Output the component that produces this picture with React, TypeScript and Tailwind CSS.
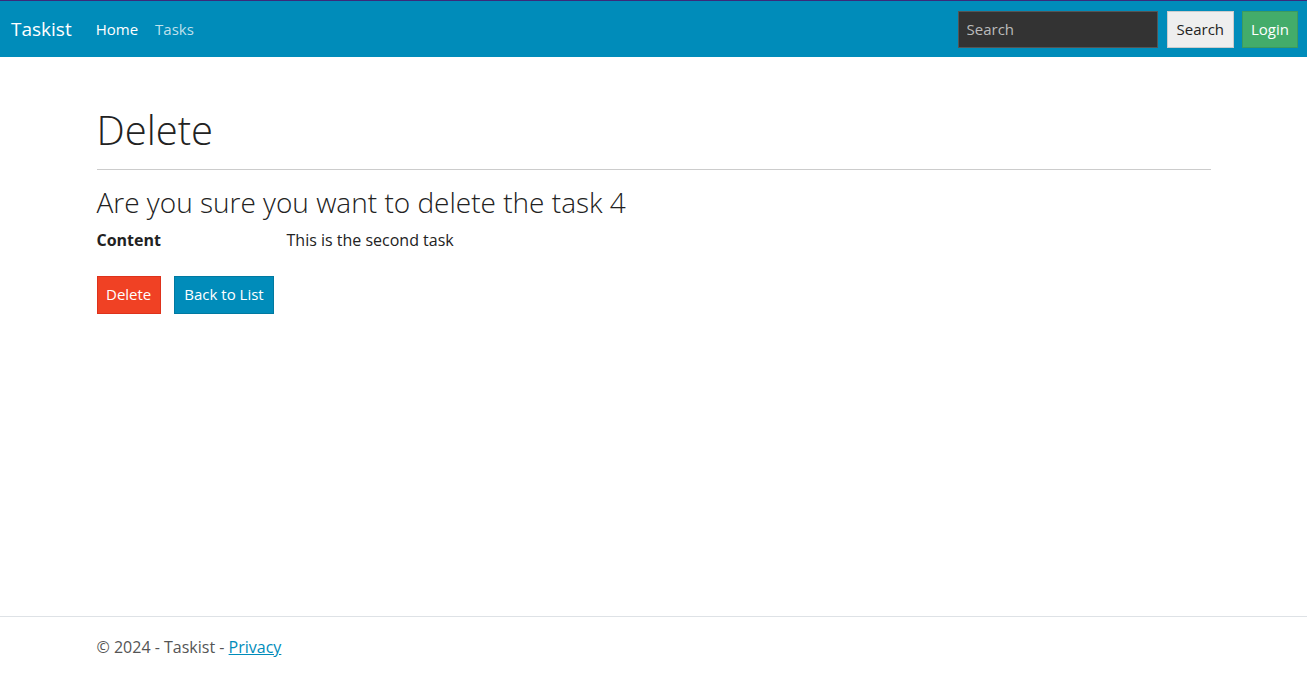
export default function App() {
  return (
    <div
      className="min-h-screen flex flex-col bg-white text-[#222]"
      style={{ fontFamily: '"Open Sans", "Liberation Sans", sans-serif' }}
    >
      {/* Navbar */}
      <nav className="h-[57px] bg-[#008cba] border-t border-[#3a2a7a] flex items-center pl-[11px] pr-[9px]">
        <a className="text-[19px] text-white mr-[24px] leading-none">Taskist</a>
        <ul className="flex items-center gap-[17px] text-[15px]">
          <li className="text-white">Home</li>
          <li className="text-white/75">Tasks</li>
        </ul>
        <div className="ml-auto flex items-center">
          <input
            placeholder="Search"
            className="w-[200px] h-[37px] bg-[#333] border border-[#555] px-[8px] text-[15px] text-white placeholder:text-[#bbb] outline-none"
          />
          <button className="ml-[9px] h-[37px] px-[9px] bg-[#eee] border border-[#ccc] text-[15px] text-[#222]">
            Search
          </button>
          <button className="ml-[8px] h-[37px] px-[8px] bg-[#43ac6a] border border-[#3c9a5f] text-[15px] text-white">
            Login
          </button>
        </div>
      </nav>

      {/* Main */}
      <main className="flex-1">
        <div className="max-w-[1140px] mx-auto px-[13px] pt-[51px]">
          <h1 className="text-[40px] font-light leading-[1.2] -mt-[2px]">Delete</h1>
          <hr className="mt-[15px] mb-[16px] border-[#ccc]" />
          <h2 className="text-[28px] font-light leading-[1.2]">
            Are you sure you want to delete the task 4
          </h2>
          <dl className="flex mt-[8px] text-[16px] leading-[1.5]">
            <dt className="w-[190px] font-bold">Content</dt>
            <dd>This is the second task</dd>
          </dl>
          <div className="flex gap-[13px] mt-[24px]">
            <button className="h-[38px] px-[8.5px] bg-[#f04124] border border-[#de321b] text-white text-[15px]">
              Delete
            </button>
            <button className="h-[38px] px-[9.5px] bg-[#008cba] border border-[#0079a1] text-white text-[15px]">
              Back to List
            </button>
          </div>
        </div>
      </main>

      {/* Footer */}
      <footer className="h-[58px] border-t border-[#dee2e6] text-[#555] text-[16px] leading-[60px]">
        <div className="max-w-[1140px] mx-auto px-[13px]">
          © 2024 - Taskist - <a className="text-[#008cba] underline">Privacy</a>
        </div>
      </footer>
    </div>
  );
}
